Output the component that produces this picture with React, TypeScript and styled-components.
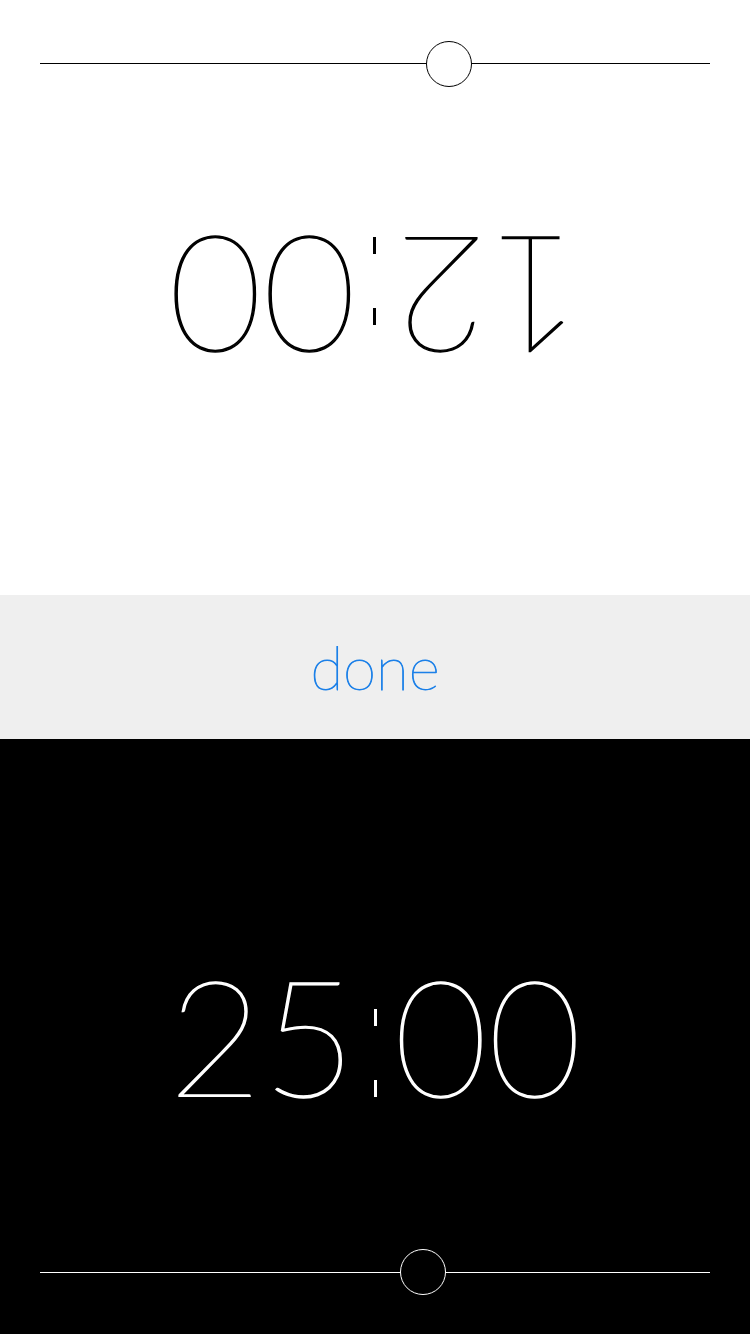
import React from "react";
import styled, { createGlobalStyle } from "styled-components";

const Global = createGlobalStyle`
  html, body { margin: 0; padding: 0; }
  body { width: 750px; height: 1334px; overflow: hidden; font-family: "Lato", "Roboto", sans-serif; }
`;

const Screen = styled.div`
  width: 750px;
  height: 1334px;
  display: flex;
  flex-direction: column;
`;

const Panel = styled.section<{ $dark?: boolean; $flipped?: boolean }>`
  height: 595px;
  box-sizing: border-box;
  padding: 196px 40px ${(p) => (p.$flipped ? 41 : 39)}px;
  display: flex;
  flex-direction: column;
  background: ${(p) => (p.$dark ? "#000" : "#fff")};
  color: ${(p) => (p.$dark ? "#fff" : "#000")};
  transform: ${(p) => (p.$flipped ? "rotate(180deg)" : "none")};
`;

const Clock = styled.div<{ $flipped?: boolean }>`
  height: 200px;
  margin-bottom: ${(p) => (p.$flipped ? 112 : 114)}px;
  display: flex;
  align-items: center;
  justify-content: center;
  font-family: "Lato", sans-serif;
  font-weight: 100;
  font-size: 162px;
  line-height: 1;
  -webkit-text-stroke: 1.4px currentColor;
`;

const Colon = styled.span<{ $dark?: boolean }>`
  position: relative;
  display: inline-block;
  color: transparent;
  -webkit-text-stroke: 0;
  &::before,
  &::after {
    content: "";
    position: absolute;
    left: 50%;
    width: 3px;
    height: 17px;
    margin-left: -1px;
    background: ${(p) => (p.$dark ? "#fff" : "#000")};
  }
  &::before {
    top: 55px;
  }
  &::after {
    top: 126px;
  }
`;

const SliderRow = styled.div`
  position: relative;
  height: 46px;
  display: flex;
  align-items: center;
`;

const Track = styled.div<{ $dark?: boolean }>`
  flex: 1;
  height: 1px;
  background: ${(p) => (p.$dark ? "#fff" : "#000")};
`;

const Thumb = styled.div<{ $dark?: boolean }>`
  position: absolute;
  top: 0;
  width: 46px;
  height: 46px;
  margin-left: -23px;
  box-sizing: border-box;
  border-radius: 50%;
  border: 1px solid ${(p) => (p.$dark ? "#fff" : "#000")};
  background: ${(p) => (p.$dark ? "#000" : "#fff")};
`;

const Band = styled.div`
  height: 144px;
  background: #efefef;
  display: flex;
  align-items: center;
  justify-content: center;
`;

const DoneButton = styled.button`
  border: 0;
  background: none;
  padding: 0;
  font-family: "Lato", sans-serif;
  font-weight: 100;
  font-size: 60px;
  color: #1c80e8;
  line-height: 1;
  -webkit-text-stroke: 0.9px #1c80e8;
`;

function Player({ time, value, dark, flipped }: { time: string; value: number; dark?: boolean; flipped?: boolean }) {
  const [mins, secs] = time.split(":");
  return (
    <Panel $dark={dark} $flipped={flipped}>
      <Clock $flipped={flipped}>
        {mins}
        <Colon $dark={dark}>:</Colon>
        {secs}
      </Clock>
      <SliderRow>
        <Track $dark={dark} />
        <Thumb $dark={dark} style={{ left: `${value * 100}%` }} />
      </SliderRow>
    </Panel>
  );
}

export default function App() {
  return (
    <Screen>
      <Global />
      <Player time="12:00" value={0.39} flipped />
      <Band>
        <DoneButton>done</DoneButton>
      </Band>
      <Player time="25:00" value={0.572} dark />
    </Screen>
  );
}
